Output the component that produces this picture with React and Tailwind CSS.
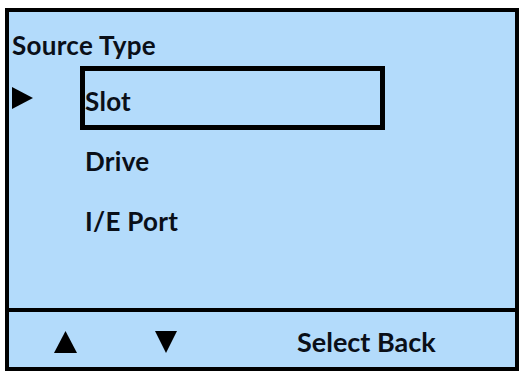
const items = ['Slot', 'Drive', 'I/E Port'];

const Tri = ({ dir, className }) => {
  const pts = {
    right: '0,0 21,11 0,22',
    up: '11.5,0 23,22 0,22',
    down: '0,0 22,0 11,22',
  }[dir];
  return (
    <svg className={className} viewBox={dir === 'right' ? '0 0 21 22' : dir === 'up' ? '0 0 23 22' : '0 0 22 22'} fill="#000">
      <polygon points={pts} />
    </svg>
  );
};

export default function App() {
  const selected = 0;

  return (
    <div className="h-[371px] w-[520px] overflow-hidden bg-white pt-[8px] pl-[5px] pr-[1px] font-['Lato',sans-serif] font-bold text-[#0a0f18]">
      <div className="flex h-[363px] flex-col border-4 border-black bg-[#b3dbfb]">
        {/* menu */}
        <div className="flex-1 pl-[3px] pt-[18px]">
          <div className="h-[30px] text-[26px] leading-[30px] tracking-[0.3px]">Source Type</div>
          <div className="mt-[6px]">
            {items.map((label, i) => (
              <div key={label} className={`flex items-center ${i === selected ? 'h-[64px]' : 'h-[60px]'}`}>
                <div className="flex w-[68px] items-center">
                  {i === selected && <Tri dir="right" className="h-[22px] w-[21px]" />}
                </div>
                <div
                  className={`flex h-full w-[305px] items-center border-[5px] ${
                    i === selected ? 'border-black pt-[5px]' : 'border-transparent pt-[1px]'
                  } text-[26px] leading-[30px] tracking-[0.3px]`}
                >
                  {label}
                </div>
              </div>
            ))}
          </div>
        </div>

        {/* soft keys */}
        <div className="flex h-[59px] items-center border-t-4 border-black pl-[45px] pt-[5px]">
          <Tri dir="up" className="h-[22px] w-[23px]" />
          <Tri dir="down" className="ml-[78px] h-[22px] w-[22px]" />
          <span className="ml-[120px] text-[27px] leading-[30px]">Select Back</span>
        </div>
      </div>
    </div>
  );
}
